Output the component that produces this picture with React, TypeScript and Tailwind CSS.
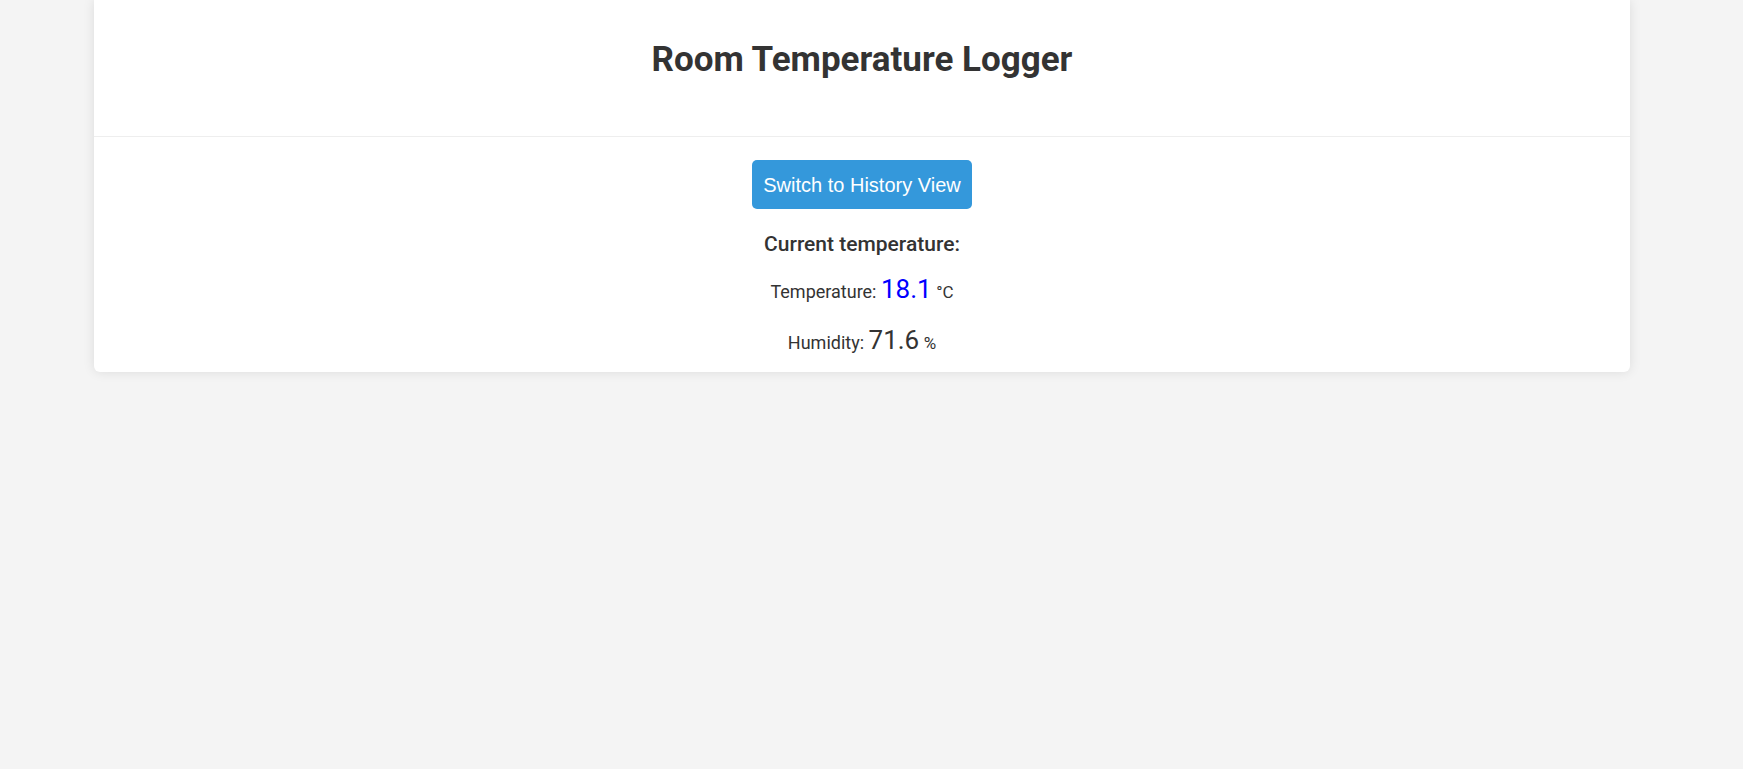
import React from "react";

export default function App() {
  return (
    <div className="min-h-screen w-full bg-[#f4f4f4]" style={{ fontFamily: "Roboto, 'Liberation Sans', sans-serif" }}>
      <div className="ml-[94px] w-[1536px] rounded-b-[6px] bg-white shadow-[0_0_12px_rgba(0,0,0,0.1)] text-[#333]">
        <div className="h-[137px] border-b border-[#eeeeee] pt-[39px] text-center">
          <h1 className="text-[35px] font-bold leading-[normal]">Room Temperature Logger</h1>
        </div>
        <div className="flex flex-col items-center pb-[17px] pt-[23px]">
          <button
            className="h-[49px] w-[220px] rounded-[5px] bg-[#3498db] text-[20px] text-white"
            style={{ fontFamily: "'Liberation Sans', Arial, sans-serif" }}
          >
            Switch to History View
          </button>
          <h3 className="mt-[23px] text-[21px] font-medium leading-[normal]">Current temperature:</h3>
          <p className="mt-[18px] text-[18px] leading-[normal]">
            Temperature: <span className="text-[26px] text-[#0000ff]">18.1</span> <span className="text-[17px]">°C</span>
          </p>
          <p className="mt-[21px] text-[18px] leading-[normal]">
            Humidity: <span className="text-[26px]">71.6</span> <span className="text-[17px]">%</span>
          </p>
        </div>
      </div>
    </div>
  );
}
